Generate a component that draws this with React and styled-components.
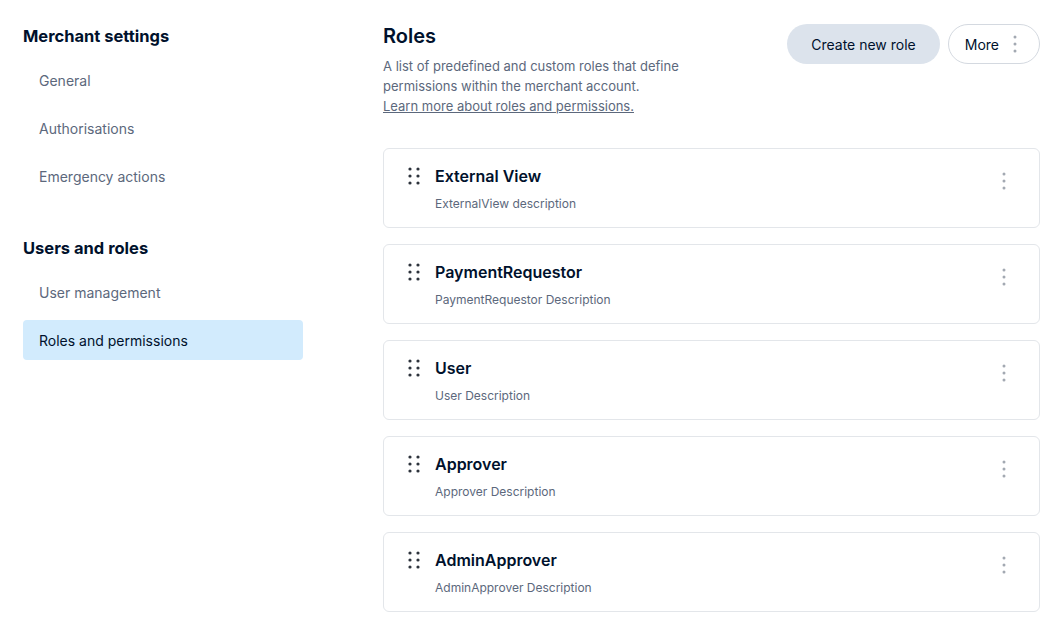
import React from 'react'
import styled, { createGlobalStyle } from 'styled-components'

const GlobalStyle = createGlobalStyle`
  body {
    margin: 0;
    background: #ffffff;
    font-family: Inter, "Noto Sans", sans-serif;
    color: #00112c;
  }
`

const Page = styled.div`
  display: grid;
  grid-template-columns: 280px 1fr;
  column-gap: 80px;
  padding: 24px 23px 20px 23px;
`

const Sidebar = styled.nav`
  display: flex;
  flex-direction: column;
`

const NavGroup = styled.div`
  display: flex;
  flex-direction: column;
  gap: 8px;
  margin-bottom: 40px;
`

const NavHeading = styled.h3`
  margin: 0 0 4px;
  font-size: 16.5px;
  line-height: 24px;
  font-weight: 700;
  color: #00112c;
`

const NavItem = styled.a`
  display: flex;
  align-items: center;
  height: 40px;
  padding: 0 16px;
  border-radius: 4px;
  font-size: 14px;
  color: ${p => (p.$active ? '#00112c' : '#5c687c')};
  background: ${p => (p.$active ? '#d2ebfd' : 'transparent')};
  text-decoration: none;
`

const Main = styled.main`
  display: flex;
  flex-direction: column;
`

const Header = styled.header`
  display: flex;
  justify-content: space-between;
  align-items: flex-start;
  margin-bottom: 32px;
`

const Intro = styled.div`
  display: flex;
  flex-direction: column;
  width: 330px;
`

const Title = styled.h1`
  margin: 0 0 8px;
  font-size: 20px;
  line-height: 24px;
  font-weight: 600;
  color: #00112c;
`

const Description = styled.p`
  margin: 0;
  font-size: 13px;
  line-height: 20px;
  color: #5c687c;
`

const LearnLink = styled.a`
  color: #5c687c;
  text-decoration: underline;
`

const Actions = styled.div`
  display: flex;
  gap: 8px;
`

const PrimaryButton = styled.button`
  height: 40px;
  padding: 0 24px;
  border: none;
  border-radius: 20px;
  background: #dce3ec;
  color: #00112c;
  font-family: inherit;
  font-size: 14px;
`

const OutlineButton = styled.button`
  display: flex;
  align-items: center;
  gap: 14px;
  height: 40px;
  padding: 0 22px 0 16px;
  border: 1px solid #d4d9e0;
  border-radius: 20px;
  background: #ffffff;
  color: #00112c;
  font-family: inherit;
  font-size: 14px;
`

const RoleList = styled.div`
  display: flex;
  flex-direction: column;
  gap: 16px;
`

const RoleCard = styled.div`
  display: flex;
  align-items: flex-start;
  height: 80px;
  box-sizing: border-box;
  padding: 15px 24px 16px 24px;
  border: 1px solid #e3e6ea;
  border-radius: 6px;
  background: #fff;
`

const Handle = styled.div`
  display: flex;
  align-items: center;
  height: 24px;
  margin-right: 15px;
`

const RoleInfo = styled.div`
  flex: 1;
  display: flex;
  flex-direction: column;
`

const RoleName = styled.div`
  font-size: 16px;
  line-height: 24px;
  font-weight: 600;
  color: #00112c;
`

const RoleDesc = styled.div`
  margin-top: 7px;
  font-size: 12px;
  line-height: 18px;
  color: #5c687c;
`

const KebabButton = styled.button`
  display: flex;
  align-items: center;
  justify-content: center;
  width: 24px;
  height: 32px;
  margin-top: 1px;
  margin-right: -1px;
  padding: 0;
  border: none;
  background: none;
`

const DragIcon = () => (
  <svg width="12" height="18" viewBox="0 0 12 18">
    {[2, 9, 16].map(y =>
      [2, 10].map(x => <circle key={`${x}-${y}`} cx={x} cy={y} r="1.6" fill="#2d333c" />)
    )}
  </svg>
)

const KebabIcon = ({ color = '#a3a9b2' }) => (
  <svg width="4" height="18" viewBox="0 0 4 18">
    {[2, 9, 16].map(y => (
      <circle key={y} cx="2" cy={y} r="1.5" fill={color} />
    ))}
  </svg>
)

const roles = [
  { name: 'External View', description: 'ExternalView description' },
  { name: 'PaymentRequestor', description: 'PaymentRequestor Description' },
  { name: 'User', description: 'User Description' },
  { name: 'Approver', description: 'Approver Description' },
  { name: 'AdminApprover', description: 'AdminApprover Description' },
]

export default function App() {
  return (
    <>
      <GlobalStyle />
      <Page>
        <Sidebar>
          <NavGroup>
            <NavHeading>Merchant settings</NavHeading>
            <NavItem>General</NavItem>
            <NavItem>Authorisations</NavItem>
            <NavItem>Emergency actions</NavItem>
          </NavGroup>
          <NavGroup>
            <NavHeading>Users and roles</NavHeading>
            <NavItem>User management</NavItem>
            <NavItem $active>Roles and permissions</NavItem>
          </NavGroup>
        </Sidebar>
        <Main>
          <Header>
            <Intro>
              <Title>Roles</Title>
              <Description>
                A list of predefined and custom roles that define permissions within the merchant
                account.
                <br />
                <LearnLink href="#">Learn more about roles and permissions.</LearnLink>
              </Description>
            </Intro>
            <Actions>
              <PrimaryButton>Create new role</PrimaryButton>
              <OutlineButton>
                More
                <KebabIcon color="#a3a9b2" />
              </OutlineButton>
            </Actions>
          </Header>
          <RoleList>
            {roles.map(role => (
              <RoleCard key={role.name}>
                <Handle>
                  <DragIcon />
                </Handle>
                <RoleInfo>
                  <RoleName>{role.name}</RoleName>
                  <RoleDesc>{role.description}</RoleDesc>
                </RoleInfo>
                <KebabButton>
                  <KebabIcon />
                </KebabButton>
              </RoleCard>
            ))}
          </RoleList>
        </Main>
      </Page>
    </>
  )
}
